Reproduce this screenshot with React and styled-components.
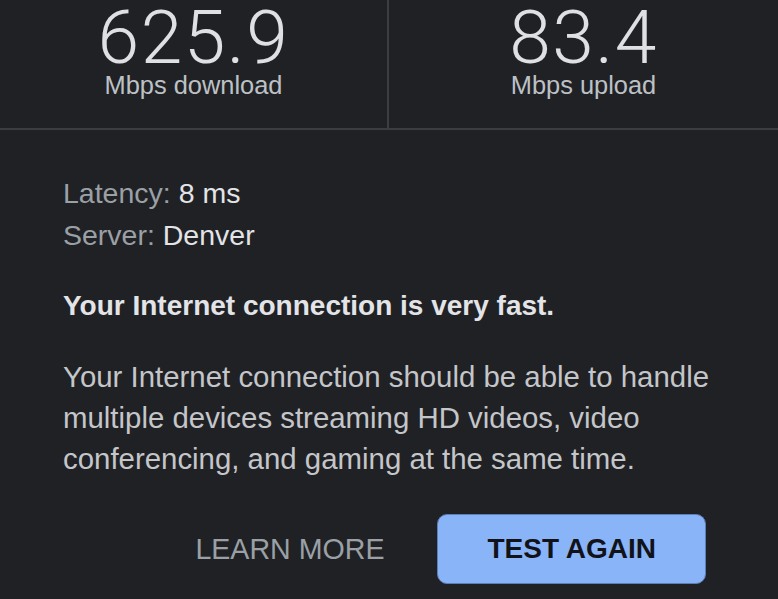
import React from 'react'
import styled, { createGlobalStyle } from 'styled-components';

const GlobalStyle = createGlobalStyle`
    html, body {
        margin: 0;
        padding: 0;
        background: #202124;
    }
    body {
        font-family: "Liberation Sans", Arial, sans-serif;
        color: #e8eaed;
        overflow: hidden;
    }
`;

const results = [
    { value: '625.9', label: 'Mbps download' },
    { value: '83.4', label: 'Mbps upload' },
];

function App() {
    return (
        <>
            <GlobalStyle />
            <CardStyled>
                <div className="speeds">
                    {results.map((r) => (
                        <div className="speed" key={r.label}>
                            <div className="value">{r.value}</div>
                            <div className="unit">{r.label}</div>
                        </div>
                    ))}
                </div>
                <div className="details">
                    <InfoLine>Latency: <span>8 ms</span></InfoLine>
                    <InfoLine>Server: <span>Denver</span></InfoLine>
                    <h2>Your Internet connection is very fast.</h2>
                    <p>Your Internet connection should be able to handle multiple devices streaming HD videos, video conferencing, and gaming at the same time.</p>
                    <div className="actions">
                        <Button>LEARN MORE</Button>
                        <Button primary>TEST AGAIN</Button>
                    </div>
                </div>
            </CardStyled>
        </>
    )
}

const CardStyled = styled.main`
    width: 778px;
    height: 599px;

    .speeds{
        display: grid;
        grid-template-columns: 389px 1fr;
        height: 128px;
        border-bottom: 2px solid #3c3d40;

        .speed{
            display: flex;
            flex-direction: column;
            align-items: center;
            &:first-child{
                border-right: 2px solid #3c3d40;
            }
        }
        .value{
            font-family: Roboto, "Liberation Sans", sans-serif;
            font-size: 75px;
            font-weight: 300;
            letter-spacing: 1.5px;
            line-height: 70px;
            margin-top: 2px;
            color: #dfe0e3;
        }
        .unit{
            font-size: 25.4px;
            line-height: 26px;
            color: #bdc1c6;
        }
    }

    .details{
        padding: 42px 40px 0 63px;

        h2{
            margin: 29px 0 0;
            font-size: 28px;
            font-weight: 700;
            line-height: 42px;
            color: #e3e4e7;
        }
        p{
            margin: 29px 0 0;
            font-size: 29.4px;
            line-height: 41px;
            color: #c4c6ca;
        }
        .actions{
            display: flex;
            justify-content: flex-end;
            align-items: center;
            gap: 2px;
            margin: 35px 32px 0 0;
        }
    }
`;

const InfoLine = styled.div`
    font-size: 28.5px;
    line-height: 42px;
    color: #9aa0a6;
    span{
        color: #e3e4e7;
    }
`;

const Button = styled.button`
    height: 70px;
    padding: 0 ${(p) => (p.primary ? '49px' : '51px')};
    border-radius: 10px;
    font-family: "Liberation Sans", Arial, sans-serif;
    font-size: ${(p) => (p.primary ? '28px' : '28.6px')};
    font-weight: ${(p) => (p.primary ? 700 : 400)};
    border: ${(p) => (p.primary ? '1px solid #5d7fb8' : 'none')};
    background: ${(p) => (p.primary ? '#8ab4f8' : 'transparent')};
    color: ${(p) => (p.primary ? '#111318' : '#9aa0a6')};
    cursor: pointer;
`;

export default App;
